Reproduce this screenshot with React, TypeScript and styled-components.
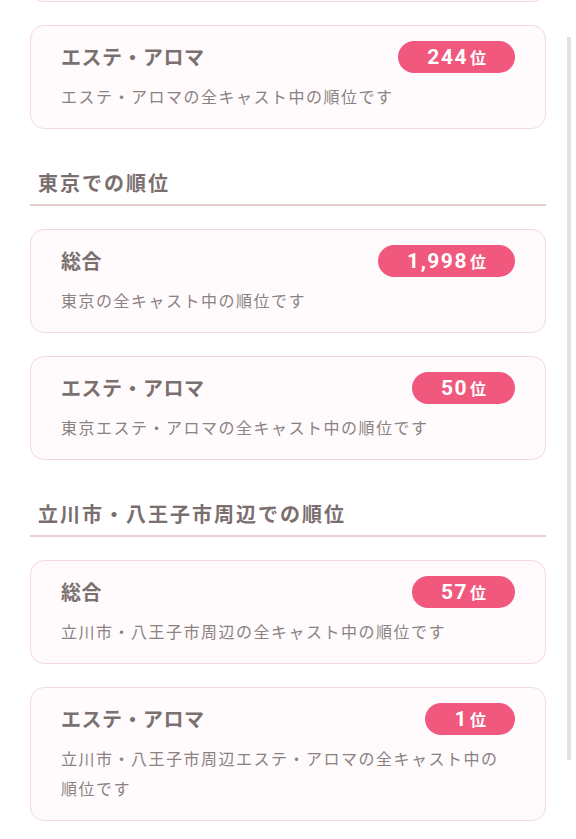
import React from "react";
import styled, { createGlobalStyle } from "styled-components";

const GlobalStyle = createGlobalStyle`
  html, body {
    margin: 0;
    padding: 0;
    background: #ffffff;
    overflow: hidden;
  }
  body {
    font-family: Roboto, "Noto Sans CJK JP", sans-serif;
  }
`;

const Page = styled.div`
  width: 576px;
  height: 839px;
  overflow: hidden;
  position: relative;
  background: #ffffff;
`;

const Content = styled.div`
  padding: 0 30px 40px 30px;
  display: flex;
  flex-direction: column;
`;

const Section = styled.section`
  display: flex;
  flex-direction: column;
  gap: 23px;
  margin-bottom: 41px;
`;

const Heading = styled.h2`
  margin: 0;
  padding: 0 0 6px 8px;
  font-size: 20px;
  line-height: 28px;
  font-weight: 700;
  letter-spacing: 2px;
  color: #7a6e6e;
  border-bottom: 2px solid #e6cfcf;
`;

const Card = styled.div`
  box-sizing: border-box;
  background: #fffbfc;
  border: 1.5px solid #f3d8de;
  border-radius: 14px;
  padding: 14.5px 30px 15.5px 30px;
  display: flex;
  flex-direction: column;
`;

// bottom edge of the previous card, scrolled mostly out of view
const CardEdge = styled(Card)`
  height: 14px;
  padding: 0;
  margin-top: -12px;
  border-top: none;
  border-radius: 0 0 14px 14px;
`;

const CardHead = styled.div`
  display: flex;
  align-items: center;
  justify-content: space-between;
  height: 32px;
  margin-bottom: 10px;
`;

const Title = styled.div`
  font-size: 20px;
  font-weight: 700;
  color: #7b7070;
  letter-spacing: 0.5px;
`;

const Badge = styled.div`
  height: 32px;
  border-radius: 16px;
  background: #f0597d;
  color: #ffffff;
  display: flex;
  align-items: center;
  padding: 0 29px;
  font-weight: 700;
`;

const Rank = styled.span`
  font-family: Roboto, sans-serif;
  font-size: 21px;
  letter-spacing: 1.5px;
`;

const Unit = styled.span`
  font-size: 16px;
  margin-left: 2px;
`;

const Desc = styled.div`
  font-size: 16px;
  line-height: 30px;
  letter-spacing: 1.5px;
  color: #8b8181;
`;

const ScrollIndicator = styled.div`
  position: absolute;
  top: 37px;
  right: 5px;
  width: 4px;
  height: 723px;
  background: #e2e2e2;
`;

type Item = { title: string; rank: string; desc: string };

const RankCard = ({ item }: { item: Item }) => (
  <Card>
    <CardHead>
      <Title>{item.title}</Title>
      <Badge>
        <Rank>{item.rank}</Rank>
        <Unit>位</Unit>
      </Badge>
    </CardHead>
    <Desc>{item.desc}</Desc>
  </Card>
);

const sections: { heading?: string; items: Item[] }[] = [
  {
    items: [
      { title: "エステ・アロマ", rank: "244", desc: "エステ・アロマの全キャスト中の順位です" },
    ],
  },
  {
    heading: "東京での順位",
    items: [
      { title: "総合", rank: "1,998", desc: "東京の全キャスト中の順位です" },
      { title: "エステ・アロマ", rank: "50", desc: "東京エステ・アロマの全キャスト中の順位です" },
    ],
  },
  {
    heading: "立川市・八王子市周辺での順位",
    items: [
      { title: "総合", rank: "57", desc: "立川市・八王子市周辺の全キャスト中の順位です" },
      {
        title: "エステ・アロマ",
        rank: "1",
        desc: "立川市・八王子市周辺エステ・アロマの全キャスト中の順位です",
      },
    ],
  },
];

export default function App() {
  return (
    <Page>
      <GlobalStyle />
      <Content>
        {sections.map((s, i) => (
          <Section key={i}>
            {i === 0 && <CardEdge />}
            {s.heading && <Heading>{s.heading}</Heading>}
            {s.items.map((it, j) => (
              <RankCard key={j} item={it} />
            ))}
          </Section>
        ))}
      </Content>
      <ScrollIndicator />
    </Page>
  );
}
